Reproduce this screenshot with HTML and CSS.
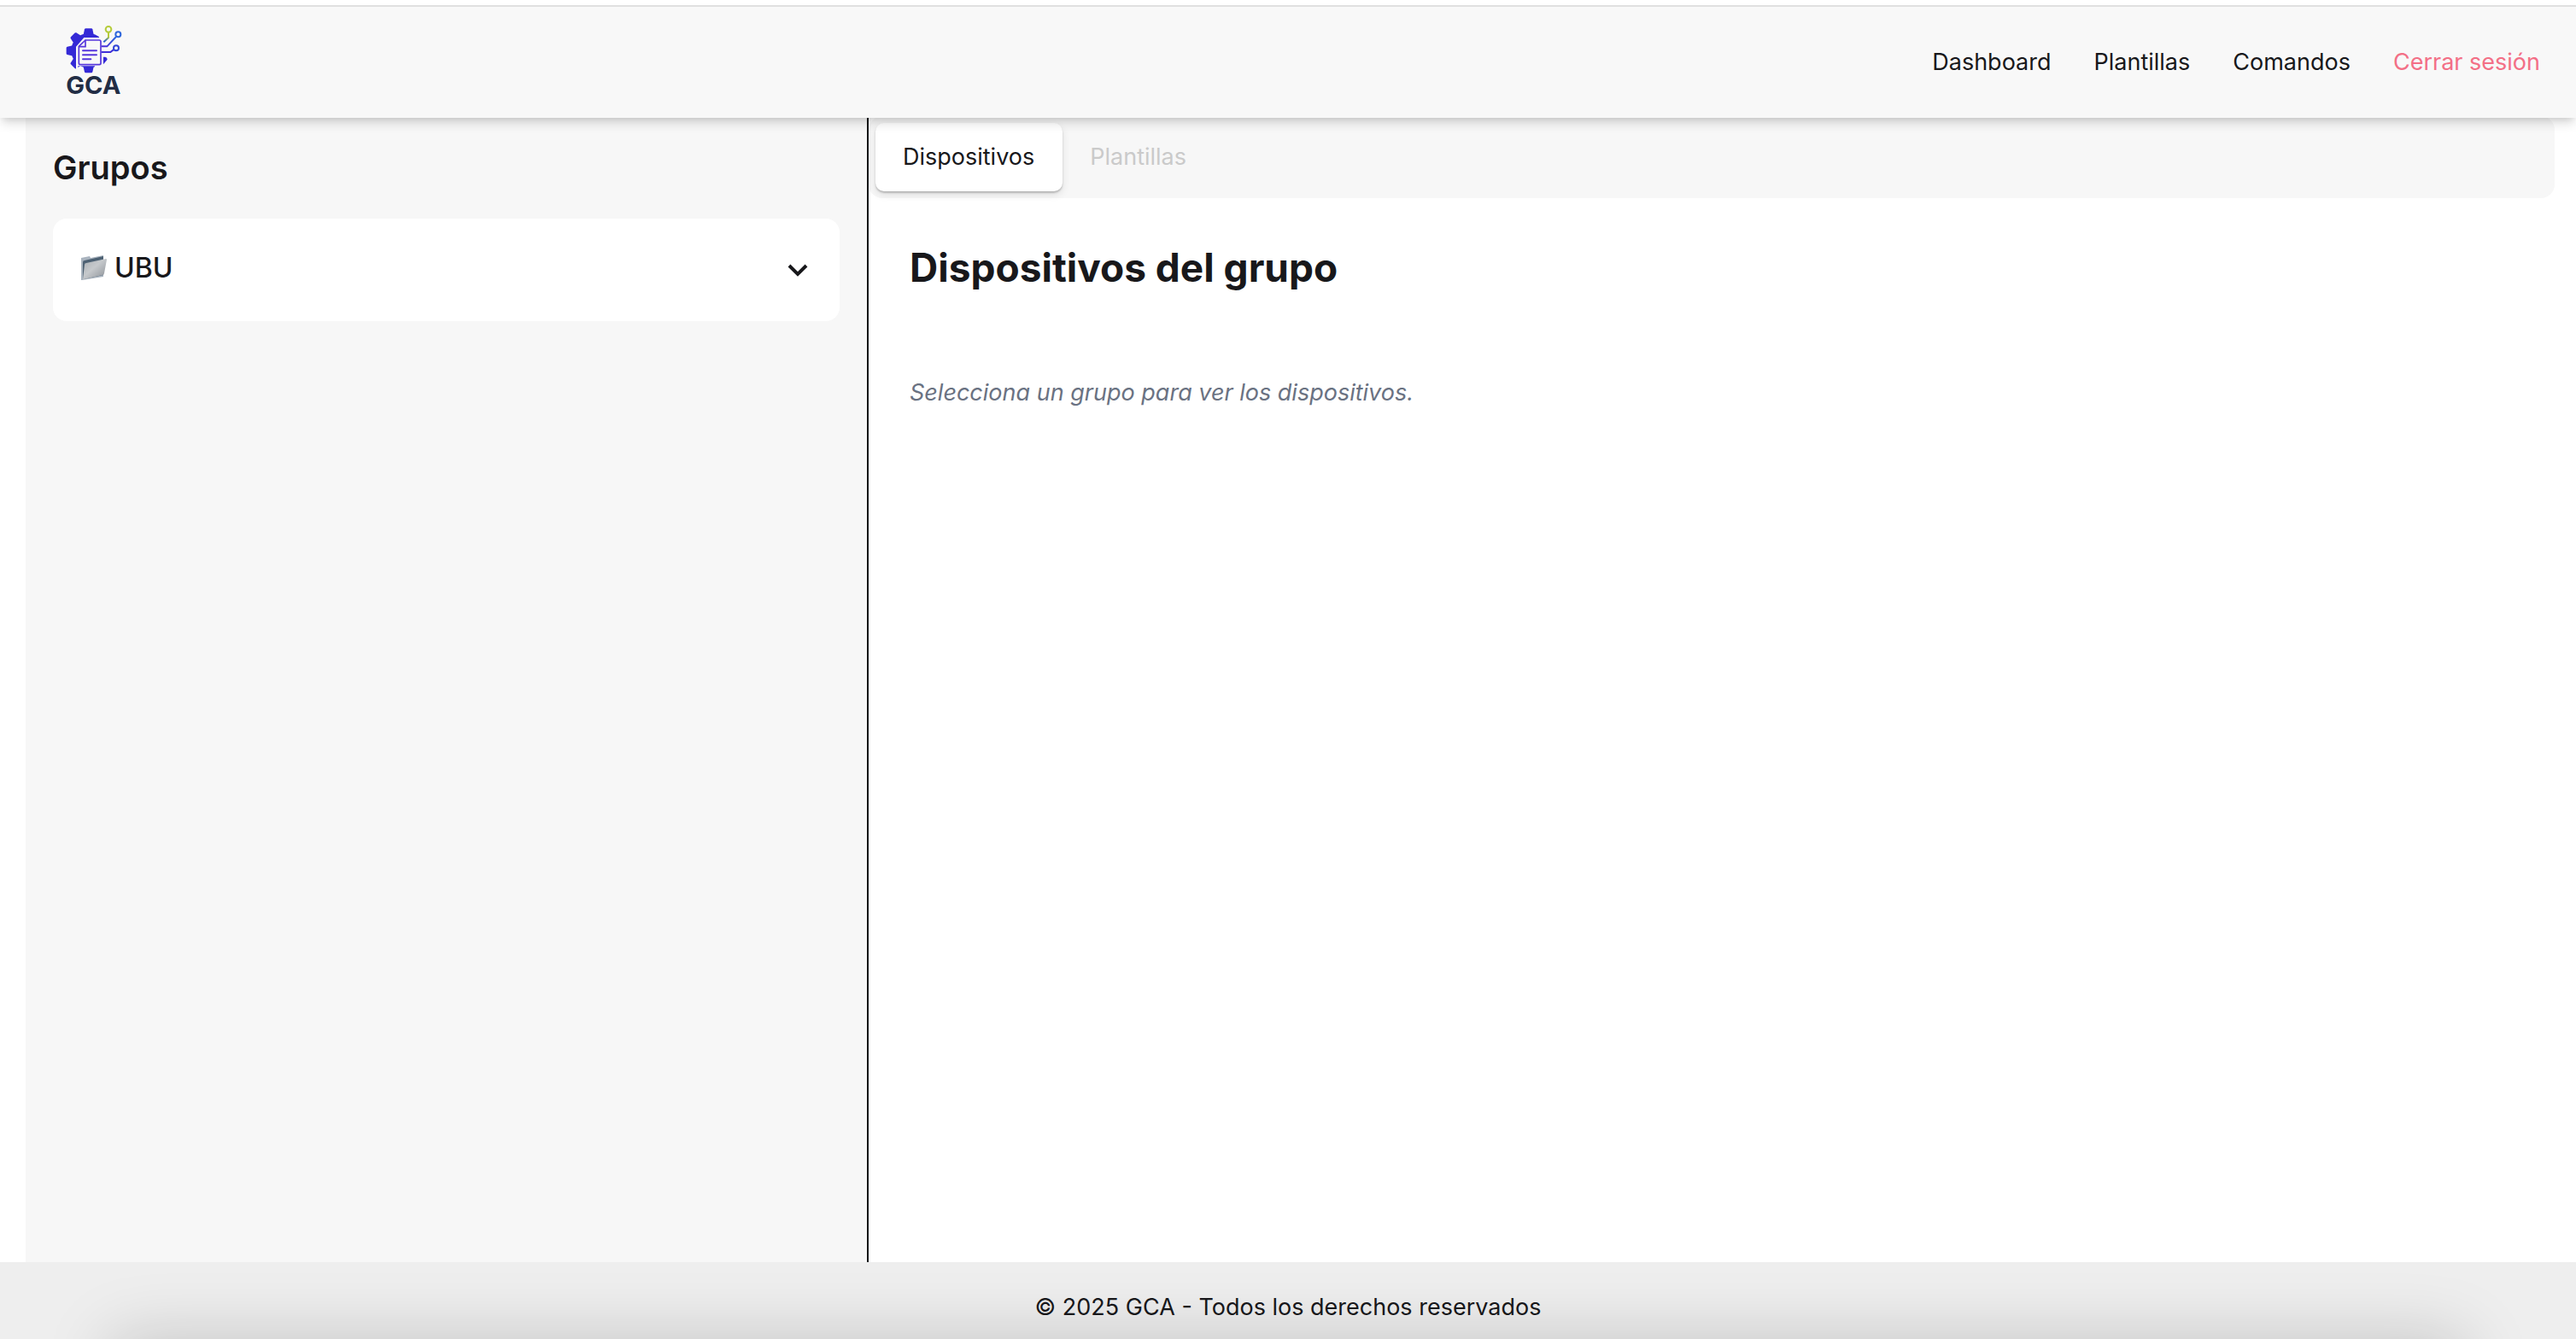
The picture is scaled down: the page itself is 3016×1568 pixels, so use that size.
FILE: index.html
```html
<!DOCTYPE html>
<html lang="es">
<head>
  <meta charset="utf-8">
  <meta name="viewport" content="width=device-width, initial-scale=1">
  <title>GCA - Dashboard</title>
  <link rel="stylesheet" href="styles.css">
</head>
<body>
  <header class="navbar">
    <a class="brand" href="#" aria-label="GCA">
      <svg class="logo" viewBox="0 9 300 300" aria-hidden="true">
        <defs>
          <linearGradient id="branch" x1="0" y1="0" x2="0" y2="1">
            <stop offset="0.45" stop-color="#b5cc3a"/>
            <stop offset="0.9" stop-color="#2b62cf"/>
          </linearGradient>
          <linearGradient id="circuit" x1="1" y1="0" x2="0" y2="1">
            <stop offset="0" stop-color="#2d6cdf"/>
            <stop offset="1" stop-color="#4b2bd8"/>
          </linearGradient>
        </defs>
        <g fill="#3429d6">
          <circle cx="131" cy="118" r="61"/>
          <path id="tooth" d="M112 66l5-23q1-3 4-3h20q3 0 4 3l5 23z"/>
          <use href="#tooth" transform="rotate(-45 131 118)"/>
          <use href="#tooth" transform="rotate(-90 131 118)"/>
          <use href="#tooth" transform="rotate(-135 131 118)"/>
          <use href="#tooth" transform="rotate(180 131 118)"/>
        </g>
        <path class="logo-gap" d="M87 184V104l28-32h53V20h50v118h-22l-13 28v34h-30v-28H94v10z"/>
        <path d="M183 140h7q7 2 7 9l-14 17z" fill="#3429d6"/>
        <g fill="none" stroke="#5636dc" stroke-width="5" stroke-linejoin="round" stroke-linecap="round">
          <path class="logo-sheet" d="M120 81h49q5 0 5 5v76q0 5-5 5h-67q-5 0-5-5v-59z"/>
          <path d="M120 82v22H98"/>
          <path d="M111 118h48M111 133h48M111 148h28" stroke-width="6"/>
        </g>
        <g fill="none" stroke-width="6">
          <path d="M201 54v18l-17 16" stroke="url(#branch)"/>
          <circle cx="201" cy="43" r="10" stroke="#b5cc3a"/>
          <path d="M176 103h20l32-34" stroke="url(#circuit)"/>
          <circle cx="235" cy="61" r="9" stroke="#2d66dc"/>
          <path d="M176 123h32l13-10" stroke="#4030d8"/>
          <circle cx="228" cy="109" r="9" stroke="#3346d8"/>
        </g>
        <text class="logo-name" x="148" y="270" text-anchor="middle">GCA</text>
      </svg>
    </a>
    <nav class="menu">
      <a href="#">Dashboard</a>
      <a href="#">Plantillas</a>
      <a href="#">Comandos</a>
      <a class="logout" href="#">Cerrar sesión</a>
    </nav>
  </header>

  <main class="workspace">
    <aside class="groups">
      <h2 class="groups-title">Grupos</h2>
      <button class="group" type="button" aria-expanded="false">
        <svg class="folder" viewBox="0 0 32 32" aria-hidden="true">
          <defs>
            <linearGradient id="front" x1="0" y1="0" x2="1" y2="1">
              <stop offset="0" stop-color="#a9aeb3"/>
              <stop offset="0.45" stop-color="#c6c9cc"/>
              <stop offset="1" stop-color="#8a8f95"/>
            </linearGradient>
          </defs>
          <path d="M1 4l10-2 1 2 15-3v25L2 30H1z" fill="#aab4bf"/>
          <path d="M3 9q0-2 2-2L27 2v22L3 29z" fill="#4d6173"/>
          <path d="M7 10L30 5q1 0 1 1l-3 16q0 2-2 2L4 29H3L5 12q0-2 2-2z" fill="url(#front)"/>
        </svg>
        <span class="group-name">UBU</span>
        <svg class="chevron" viewBox="0 0 24 16" aria-hidden="true">
          <path d="M2 2l10 10L22 2"/>
        </svg>
      </button>
    </aside>

    <section class="details">
      <div class="tabs" role="tablist">
        <button class="tab tab-active" type="button" role="tab" aria-selected="true">Dispositivos</button>
        <button class="tab" type="button" role="tab" aria-selected="false" disabled>Plantillas</button>
      </div>
      <div class="panel" role="tabpanel">
        <h1 class="panel-title">Dispositivos del grupo</h1>
        <p class="panel-empty">Selecciona un grupo para ver los dispositivos.</p>
      </div>
    </section>
  </main>

  <footer class="footer">
    <p class="footer-text">© 2025 GCA - Todos los derechos reservados</p>
  </footer>
</body>
</html>
```

FILE: styles.css
```css
* {
  box-sizing: border-box;
}

body {
  display: flex;
  flex-direction: column;
  min-height: 100vh;
  margin: 0;
  padding-top: 6px;
  background: #fff;
  color: #18181b;
  font: 400 27px/40px Inter, "Liberation Sans", sans-serif;
}

h1,
h2,
p {
  margin: 0;
}

a {
  color: inherit;
  text-decoration: none;
}

button {
  border: 0;
  color: inherit;
  font: inherit;
}

.navbar {
  position: relative;
  z-index: 1;
  display: flex;
  align-items: center;
  justify-content: space-between;
  padding: 15px 42px 15px 60px;
  border-top: 2px solid #e0e0e0;
  background: #f8f8f8;
  box-shadow: 0 8px 12px -2px rgba(0, 0, 0, 0.14), 0 4px 8px -4px rgba(0, 0, 0, 0.12);
}

.brand,
.logo {
  display: block;
}

.logo {
  width: 100px;
  height: 100px;
}

.logo-gap,
.logo-sheet {
  fill: #f8f8f8;
}

.logo-name {
  fill: #222d45;
  font-size: 87px;
  font-weight: 700;
}

.menu {
  display: flex;
  gap: 50px;
}

.logout {
  color: #f36f86;
}

.workspace {
  display: grid;
  flex: 1;
  grid-template-columns: 1fr 2fr;
  padding: 0 25px 0 30px;
}

.groups {
  padding: 38px 32px 32px;
  border-right: 2px solid #101418;
  background: #f7f7f7;
}

.groups-title {
  margin-bottom: 40px;
  font-size: 38px;
  font-weight: 600;
  line-height: 40px;
}

.group {
  display: flex;
  align-items: center;
  width: 100%;
  height: 120px;
  padding: 0 37px 4px 32px;
  border-radius: 16px;
  background: #fff;
  text-align: left;
}

.folder {
  width: 32px;
  height: 32px;
}

.group-name {
  flex: 1;
  margin-left: 8px;
  font-size: 32px;
  font-weight: 500;
}

.chevron {
  width: 24px;
  height: 16px;
  margin-top: 6px;
  fill: none;
  stroke: #18181b;
  stroke-width: 4;
}

.tabs {
  display: flex;
  margin-top: -2px;
  padding: 8px;
  border-radius: 16px;
  background: #f7f7f7;
}

.tab {
  height: 80px;
  padding: 0 33px 0 32px;
  border-radius: 10px;
  background: transparent;
}

.tab:disabled {
  color: #cacaca;
}

.tab-active {
  background: #fff;
  box-shadow: 0 2px 2px rgba(0, 0, 0, 0.2), 0 4px 10px rgba(0, 0, 0, 0.1);
}

.panel {
  padding: 48px;
}

.panel-title {
  margin-bottom: 94px;
  font-size: 46px;
  font-weight: 700;
  line-height: 66px;
}

.panel-empty {
  color: #6a7282;
  font-style: italic;
}

.footer {
  position: relative;
  overflow: hidden;
  padding: 33px 32px 17px;
  background: #eee;
  text-align: center;
}

.footer::after {
  content: "";
  position: absolute;
  top: 100%;
  right: 130px;
  left: 130px;
  height: 100px;
  box-shadow: 0 0 80px rgba(0, 0, 0, 0.18);
}
```
